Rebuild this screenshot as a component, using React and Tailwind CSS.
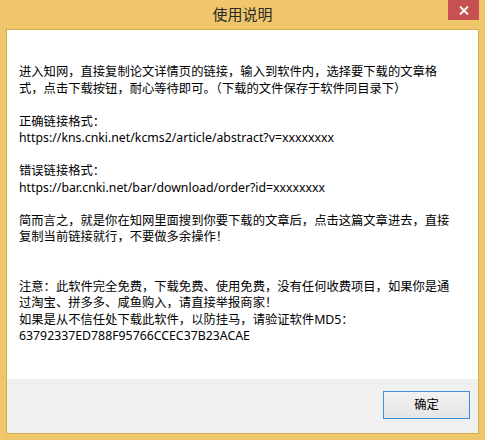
import React from "react";

const lines = [
  "进入知网，直接复制论文详情页的链接，输入到软件内，选择要下载的文章格",
  "式，点击下载按钮，耐心等待即可。（下载的文件保存于软件同目录下）",
  "",
  "正确链接格式：",
  "https://kns.cnki.net/kcms2/article/abstract?v=xxxxxxxx",
  "",
  "错误链接格式：",
  "https://bar.cnki.net/bar/download/order?id=xxxxxxxx",
  "",
  "简而言之，就是你在知网里面搜到你要下载的文章后，点击这篇文章进去，直接",
  "复制当前链接就行，不要做多余操作！",
  "",
  "",
  "注意：此软件完全免费，下载免费、使用免费，没有任何收费项目，如果你是通",
  "过淘宝、拼多多、咸鱼购入，请直接举报商家！",
  "如果是从不信任处下载此软件，以防挂马，请验证软件MD5：",
  "63792337ED788F95766CCEC37B23ACAE",
];

const font = {
  fontFamily: '"Noto Sans", "Noto Sans CJK SC", sans-serif',
};

export default function App() {
  return (
    <div
      className="w-[485px] h-[440px] bg-[#efc76a] flex flex-col overflow-hidden"
      style={font}
    >
      {/* title bar */}
      <div className="relative h-[29px] shrink-0 flex items-center justify-center">
        <span className="text-[15px] leading-none text-[#2a2a2a] -mt-[1px]">使用说明</span>
        <button className="absolute top-0 right-[6px] w-[31px] h-[20px] bg-[#c75050] flex items-center justify-center">
          <svg width="10" height="9" viewBox="0 0 10 9">
            <path d="M1 0.5 L9 8.5 M9 0.5 L1 8.5" stroke="#fff" strokeWidth="1.8" />
          </svg>
        </button>
      </div>

      {/* client */}
      <div className="mx-[6px] h-[405px] border border-[#d2a954] flex flex-col">
        <div className="h-[349px] bg-white pl-[12px] pt-[34px]">
          {lines.map((t, i) => (
            <div key={i} className="h-[16.5px] text-[12.3px] leading-[16.5px] text-black whitespace-nowrap">
              {t}
            </div>
          ))}
        </div>
        <div className="flex-1 bg-[#f0f0f0] flex justify-end items-start pt-[12px] pr-[8px]">
          <button className="w-[87px] h-[28px] border border-[#3c8fdc] bg-gradient-to-b from-[#f2f2f2] to-[#e5e5e5] text-[12.3px] text-black flex items-center justify-center">
            确定
          </button>
        </div>
      </div>
    </div>
  );
}
